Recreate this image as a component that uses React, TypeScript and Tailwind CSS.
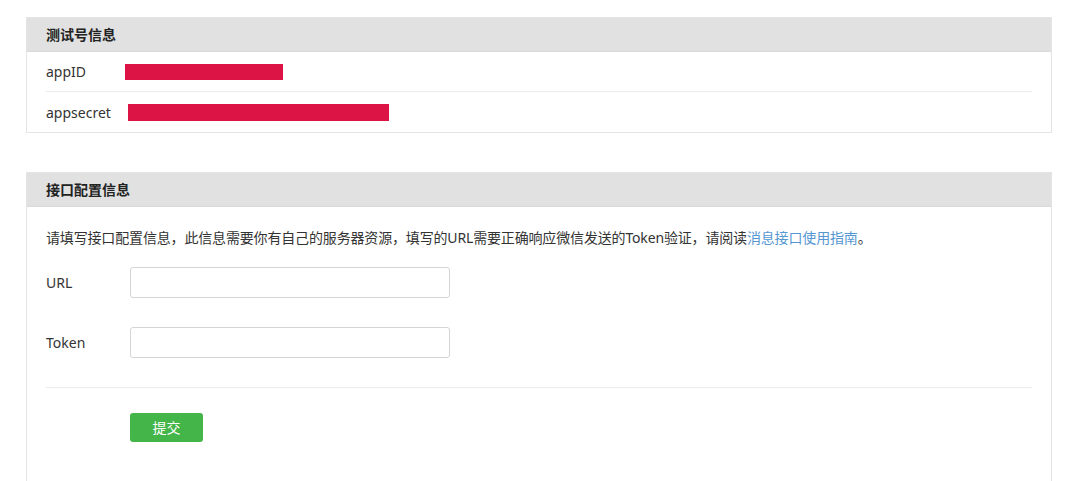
import React from "react";

const font = { fontFamily: '"Noto Sans", "Noto Sans CJK SC", sans-serif' };

function Panel({ title, children }: { title: string; children: React.ReactNode }) {
  return (
    <div className="ml-[26px] w-[1026px] border border-[#e4e4e4] bg-white">
      <div className="h-[34px] bg-[#e1e1e1] border-b border-[#d9d9d9] flex items-center pl-[19px] text-[14px] font-bold text-[#222]">
        {title}
      </div>
      {children}
    </div>
  );
}

export default function App() {
  return (
    <div className="bg-white min-h-[481px] pt-[17px] text-[#333] text-[14px]" style={font}>
      <Panel title="测试号信息">
        <div className="px-[19px]">
          <div className="h-[40px] flex items-center border-b border-[#ececec]">
            <span className="w-[79px]">appID</span>
            <span className="inline-block w-[158px] h-[16px] bg-[#dc1446]" />
          </div>
          <div className="h-[40px] flex items-center">
            <span className="w-[82px]">appsecret</span>
            <span className="inline-block w-[261px] h-[17px] bg-[#dc1446]" />
          </div>
        </div>
      </Panel>

      <div className="h-[39px]" />

      <Panel title="接口配置信息">
        <div className="px-[19px] pt-[21px] pb-[40px]">
          <p className="leading-[20px] tracking-[-0.16px]">
            请填写接口配置信息，此信息需要你有自己的服务器资源，填写的URL需要正确响应微信发送的Token验证，请阅读
            <span className="text-[#5597d2]">消息接口使用指南</span>。
          </p>
          <div className="mt-[19px] flex items-center h-[31px]">
            <span className="w-[84px]">URL</span>
            <input className="w-[320px] h-[31px] border border-[#d5d5d5] rounded-[3px] outline-none" />
          </div>
          <div className="mt-[29px] flex items-center h-[31px]">
            <span className="w-[84px]">Token</span>
            <input className="w-[320px] h-[31px] border border-[#d5d5d5] rounded-[3px] outline-none" />
          </div>
          <div className="mt-[29px] border-t border-[#ececec]" />
          <div className="mt-[25px] pl-[84px]">
            <button className="w-[73px] h-[29px] bg-[#44b549] text-white rounded-[3px] text-[14px]">提交</button>
          </div>
        </div>
      </Panel>
    </div>
  );
}
